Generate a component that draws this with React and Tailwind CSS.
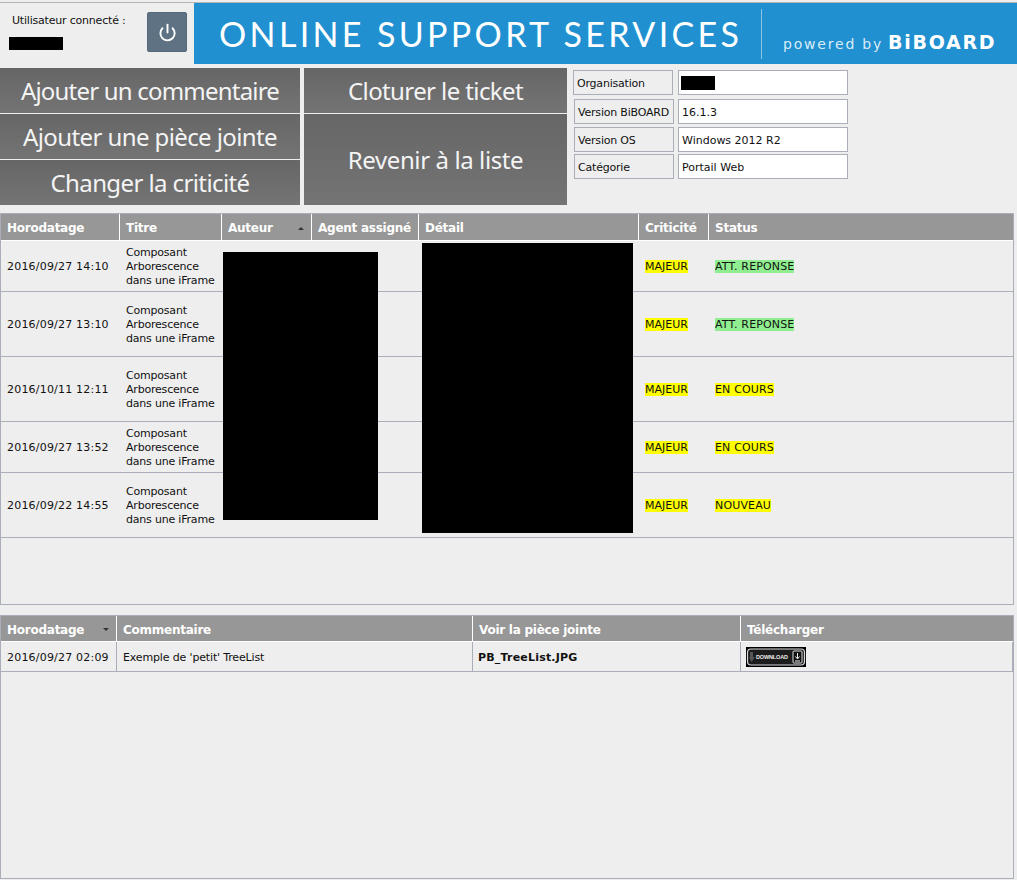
import { Power } from "lucide-react";

const f = "font-['DejaVu_Sans',sans-serif]";
const cols1 = "grid grid-cols-[119px_102px_90px_107px_220px_70px_1fr]";
const cols2 = "grid grid-cols-[116px_356px_268px_1fr]";

function Btn({ children, className = "" }) {
  return (
    <button className={`flex items-center justify-center bg-gradient-to-b from-[#666666] to-[#747474] font-['Noto_Sans',sans-serif] text-[24px] leading-none text-[#f4f4f4] ${className}`}>
      {children}
    </button>
  );
}

function Info({ label, value, labelClass = "", valueClass = "ml-[4px]", className = "", children }) {
  return (
    <div className={`flex h-[25px] ${className}`}>
      <div className={`flex items-center whitespace-nowrap border border-[#a9aeb8] pl-[3px] pt-[3px] tracking-[-0.2px] ${labelClass}`}>{label}</div>
      <div className={`flex w-[170px] items-center border border-[#a9aeb8] bg-white pl-[3px] pt-[3px] ${valueClass}`}>
        {value}
        {children}
      </div>
    </div>
  );
}

function Head({ children, sort, className = "" }) {
  return (
    <div className={`flex items-center justify-between border-r border-white pl-[6px] pr-[7px] pt-[2px] tracking-[-0.25px] ${className}`}>
      <span>{children}</span>
      {sort === "up" && <span className="h-0 w-0 border-x-[3px] border-b-[3px] border-x-transparent border-b-[#333333]" />}
      {sort === "down" && <span className="h-0 w-0 border-x-[3px] border-t-[3px] border-x-transparent border-t-[#333333]" />}
    </div>
  );
}

const rows = [
  { d: "2016/09/27 14:10", s: "ATT. REPONSE", c: "bg-[#90ee90]", h: "h-[51px]" },
  { d: "2016/09/27 13:10", s: "ATT. REPONSE", c: "bg-[#90ee90]", h: "h-[65px]" },
  { d: "2016/10/11 12:11", s: "EN COURS", c: "bg-[#ffff00]", h: "h-[65px]" },
  { d: "2016/09/27 13:52", s: "EN COURS", c: "bg-[#ffff00]", h: "h-[51px]" },
  { d: "2016/09/22 14:55", s: "NOUVEAU", c: "bg-[#ffff00]", h: "h-[65px]" },
];

function Row({ r }) {
  return (
    <div className={`${cols1} ${r.h} items-center border-b border-[#a9aeb8] pt-[2px] text-[#111111]`}>
      <div className="whitespace-nowrap pl-[6px] tracking-[0.2px]">{r.d}</div>
      <div className="whitespace-nowrap pl-[6px] leading-[14px] tracking-[-0.2px]">Composant<br />Arborescence<br />dans une iFrame</div>
      <div />
      <div />
      <div />
      <div className="pl-[6px]"><span className="bg-[#ffff00]">MAJEUR</span></div>
      <div className="pl-[6px] tracking-[0.15px]"><span className={r.c}>{r.s}</span></div>
    </div>
  );
}

function DownloadBadge() {
  return (
    <svg width="60" height="20" viewBox="0 0 60 20" className="block">
      <rect width="60" height="20" fill="#000" />
      <rect x="1.5" y="2" width="57" height="16" rx="3.5" fill="#1c1c1c" stroke="#d8d8d8" strokeWidth="1.2" />
      <path d="M4 5h3v5h2l-3.5 5L3 10h1z" fill="#555" />
      <text x="10" y="12" fontSize="5.5" fontWeight="700" fill="#eee" fontFamily="'Liberation Sans',sans-serif" textLength="32">DOWNLOAD</text>
      <rect x="47" y="4" width="9" height="12" rx="1" fill="#111" stroke="#ddd" strokeWidth="1" />
      <path d="M51.5 6v5M49.5 9.5l2 2.5 2-2.5M49 14h5" stroke="#eee" strokeWidth="1" fill="none" />
    </svg>
  );
}

export default function App() {
  return (
    <div className={`${f} flex h-[880px] w-[1017px] flex-col overflow-hidden bg-[#eeeeee] pt-[2px] text-[11px] text-[#111111]`}>
      <div className="h-px shrink-0 bg-[#b4b4b4]" />
      {/* header */}
      <div className="flex h-[61px] shrink-0">
        <div className="w-[147px] shrink-0 pl-[12px] pt-[10px]">
          <div className="whitespace-nowrap leading-[16px] tracking-[-0.2px]">Utilisateur connecté :</div>
          <div className="ml-[-3px] mt-[8px] h-[13px] w-[54px] bg-black" />
        </div>
        <div className="mt-[9px] flex h-[40px] w-[40px] shrink-0 items-center justify-center rounded-[2px] border border-[#56687a] bg-[#5f7284]">
          <Power size={19} color="#ffffff" strokeWidth={2.4} />
        </div>
        <div className="ml-[7px] flex flex-1 items-center bg-[#2090d0] pl-[25px] text-white">
          <span className="w-[522px] whitespace-nowrap font-['Lato',sans-serif] text-[34px] font-normal leading-none tracking-[3.35px]">ONLINE SUPPORT SERVICES</span>
          <div className="ml-[20px] h-[50px] w-px bg-[#8cc4e4]" />
          <div className="ml-[21px] mt-[20px] flex items-baseline whitespace-nowrap">
            <span className="text-[14px] tracking-[1.8px] text-[#d8ecf8]">powered by</span>
            <span className="ml-[5px] text-[19px] font-bold leading-none tracking-[1.7px]">BiBOARD</span>
          </div>
        </div>
      </div>
      {/* actions */}
      <div className="mt-[4px] flex h-[137px] shrink-0">
        <div className="flex w-[300px] flex-col gap-px">
          <Btn className="h-[45px] tracking-[-0.8px]">Ajouter un commentaire</Btn>
          <Btn className="h-[45px] tracking-[-0.6px]">Ajouter une pièce jointe</Btn>
          <Btn className="h-[45px] tracking-[-0.6px]">Changer la criticité</Btn>
        </div>
        <div className="ml-[4px] flex w-[263px] flex-col gap-px">
          <Btn className="h-[45px] tracking-[-0.6px]">Cloturer le ticket</Btn>
          <Btn className="h-[91px] tracking-[-0.4px]">Revenir à la liste</Btn>
        </div>
        <div className="ml-[6px] flex flex-col pt-[2px]">
          <Info label="Organisation" labelClass="w-[100px]" valueClass="ml-[5px]">
            <span className="mb-[3px] ml-[-1px] h-[14px] w-[34px] bg-black" />
          </Info>
          <Info label="Version BiBOARD" value="16.1.3" labelClass="ml-px w-[100px]" className="mt-[4px]" />
          <Info label="Version OS" value="Windows 2012 R2" labelClass="ml-px w-[100px]" className="mt-[3px]" />
          <Info label="Catégorie" value="Portail Web" labelClass="ml-px w-[100px]" className="mt-[2px]" />
        </div>
      </div>
      {/* tickets */}
      <div className="relative mt-[8px] flex h-[392px] w-[1014px] shrink-0 flex-col border border-[#a9aeb8]">
        <div className={`${cols1} h-[27px] shrink-0 border-b border-white bg-[#979797] text-[12px] font-bold text-white`}>
          <Head>Horodatage</Head>
          <Head>Titre</Head>
          <Head sort="up">Auteur</Head>
          <Head className="whitespace-nowrap">Agent assigné</Head>
          <Head>Détail</Head>
          <Head>Criticité</Head>
          <Head className="border-r-0">Status</Head>
        </div>
        {rows.map((r) => <Row key={r.d} r={r} />)}
        <div className="absolute left-[222px] top-[38px] h-[268px] w-[155px] bg-black" />
        <div className="absolute left-[421px] top-[29px] h-[290px] w-[211px] bg-black" />
      </div>
      {/* attachments */}
      <div className="mt-[10px] flex h-[264px] w-[1014px] shrink-0 flex-col border border-[#a9aeb8]">
        <div className={`${cols2} h-[26px] shrink-0 border-b border-white bg-[#979797] text-[12px] font-bold text-white`}>
          <Head sort="down">Horodatage</Head>
          <Head>Commentaire</Head>
          <Head>Voir la pièce jointe</Head>
          <Head className="border-r-0">Télécharger</Head>
        </div>
        <div className={`${cols2} h-[30px] shrink-0 items-stretch border-b border-[#a9aeb8]`}>
          <div className="flex items-center whitespace-nowrap border-r border-[#a9aeb8] pl-[6px] pt-[4px] tracking-[0.2px]">2016/09/27 02:09</div>
          <div className="flex items-center border-r border-[#a9aeb8] pl-[6px] pt-[4px] tracking-[-0.15px]">Exemple de 'petit' TreeList</div>
          <div className="flex items-center border-r border-[#a9aeb8] pl-[5px] pt-[4px] font-bold tracking-[0.2px]">PB_TreeList.JPG</div>
          <div className="flex items-center border-r border-[#a9aeb8] pl-[5px]"><DownloadBadge /></div>
        </div>
      </div>
    </div>
  );
}
